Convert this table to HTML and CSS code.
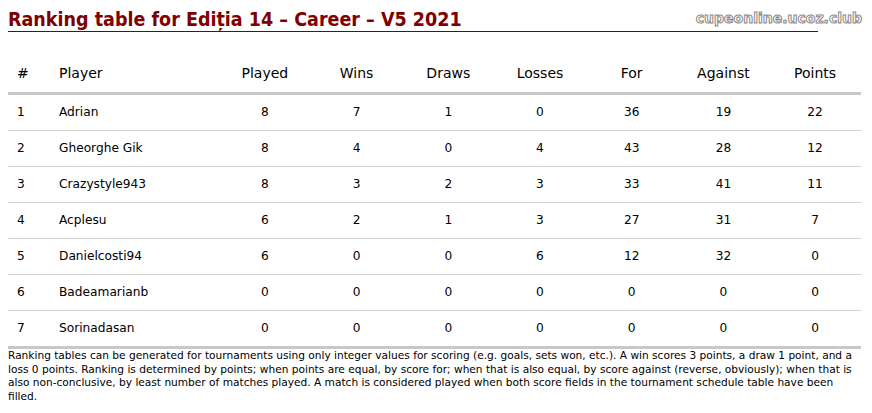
FILE: index.html
```html
<!DOCTYPE html>
<html>
<head>
<meta charset="utf-8">
<link rel="stylesheet" href="styles.css">
</head>
<body>
<div class="page">
  <h1 class="title">Ranking table for Ediția 14 – Career – V5 2021</h1>
  <div class="logo">cupeonline.ucoz.club</div>
  <table class="ranking">
    <thead>
      <tr><th class="num">#</th><th class="name">Player</th><th>Played</th><th>Wins</th><th>Draws</th><th>Losses</th><th>For</th><th>Against</th><th>Points</th></tr>
    </thead>
    <tbody>
      <tr><td class="num">1</td><td class="name">Adrian</td><td>8</td><td>7</td><td>1</td><td>0</td><td>36</td><td>19</td><td>22</td></tr>
      <tr><td class="num">2</td><td class="name">Gheorghe Gik</td><td>8</td><td>4</td><td>0</td><td>4</td><td>43</td><td>28</td><td>12</td></tr>
      <tr><td class="num">3</td><td class="name">Crazystyle943</td><td>8</td><td>3</td><td>2</td><td>3</td><td>33</td><td>41</td><td>11</td></tr>
      <tr><td class="num">4</td><td class="name">Acplesu</td><td>6</td><td>2</td><td>1</td><td>3</td><td>27</td><td>31</td><td>7</td></tr>
      <tr><td class="num">5</td><td class="name">Danielcosti94</td><td>6</td><td>0</td><td>0</td><td>6</td><td>12</td><td>32</td><td>0</td></tr>
      <tr><td class="num">6</td><td class="name">Badeamarianb</td><td>0</td><td>0</td><td>0</td><td>0</td><td>0</td><td>0</td><td>0</td></tr>
      <tr><td class="num">7</td><td class="name">Sorinadasan</td><td>0</td><td>0</td><td>0</td><td>0</td><td>0</td><td>0</td><td>0</td></tr>
    </tbody>
  </table>
  <p class="note">Ranking tables can be generated for tournaments using only integer values for scoring (e.g. goals, sets won, etc.). A win scores 3 points, a draw 1 point, and a loss 0 points. Ranking is determined by points; when points are equal, by score for; when that is also equal, by score against (reverse, obviously); when that is also non-conclusive, by least number of matches played. A match is considered played when both score fields in the tournament schedule table have been filled.</p>
</div>
</body>
</html>
```

FILE: styles.css
```css
html, body {
  margin: 0;
  padding: 0;
  background: #fff;
}
body {
  padding: 8px;
  font-family: "DejaVu Sans", Verdana, sans-serif;
  color: #000;
}
.page {
  position: relative;
  width: 853px;
}
.title {
  margin: 0;
  width: 810px;
  font-family: "DejaVu Sans Condensed", "DejaVu Sans", sans-serif;
  font-size: 19.5px;
  line-height: 23px;
  font-weight: bold;
  color: #800000;
  border-bottom: 1px solid #800000;
  white-space: nowrap;
}
.logo {
  position: absolute;
  top: 2px;
  right: -1px;
  font-size: 14px;
  font-weight: bold;
  color: #fff;
  -webkit-text-stroke: 1px #8a8a8a;
}
.ranking {
  margin-top: 20px;
  width: 853px;
  border-collapse: collapse;
  table-layout: fixed;
}
.ranking th {
  height: 38px;
  padding: 2px 0 0;
  font-size: 14px;
  font-weight: normal;
  text-align: center;
  border-bottom: 3px solid #c8c8c8;
  width: 91.7px;
}
.ranking th.num { width: 33px; }
.ranking th.name { width: 160px; }
.ranking td {
  height: 33px;
  padding: 0 0 2px;
  font-size: 12.2px;
  text-align: center;
  border-bottom: 1px solid #d2d2d2;
}
.ranking tbody tr:last-child td {
  border-bottom: 3px solid #c8c8c8;
}
.ranking .num,
.ranking .name {
  text-align: left;
  padding-left: 9px;
}
.note {
  margin: 0;
  font-size: 10.6px;
  line-height: 13.7px;
}
```
